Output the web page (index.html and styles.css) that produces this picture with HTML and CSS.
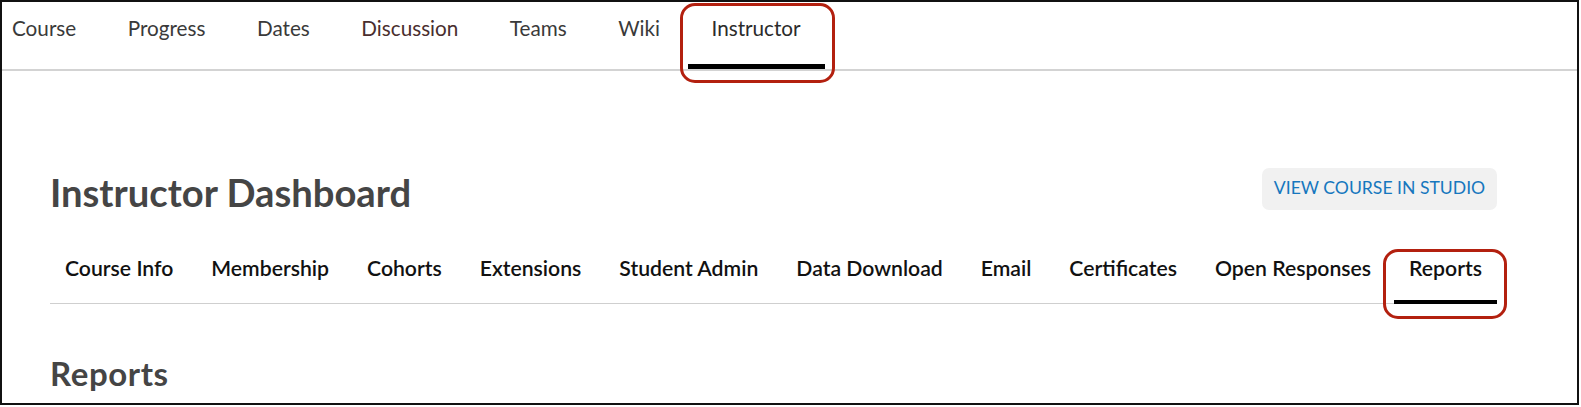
FILE: index.html
```html
<!DOCTYPE html>
<html lang="en">
<head>
<meta charset="utf-8">
<title>Instructor Dashboard</title>
<link rel="stylesheet" href="styles.css">
</head>
<body>
<div class="frame">
  <nav class="course-nav">
    <a class="nav-item first" href="#">Course</a>
    <a class="nav-item" href="#">Progress</a>
    <a class="nav-item" href="#">Dates</a>
    <a class="nav-item visited" href="#">Discussion</a>
    <a class="nav-item" href="#">Teams</a>
    <a class="nav-item" href="#">Wiki</a>
    <a class="nav-item active" href="#">Instructor</a>
  </nav>
  <main class="content">
    <div class="header-row">
      <h1 class="page-title">Instructor Dashboard</h1>
      <a class="studio-btn" href="#">VIEW COURSE IN STUDIO</a>
    </div>
    <ul class="tabs">
      <li class="tab">Course Info</li>
      <li class="tab">Membership</li>
      <li class="tab">Cohorts</li>
      <li class="tab">Extensions</li>
      <li class="tab">Student Admin</li>
      <li class="tab">Data Download</li>
      <li class="tab">Email</li>
      <li class="tab">Certificates</li>
      <li class="tab">Open Responses</li>
      <li class="tab active">Reports</li>
    </ul>
    <h2 class="section-title">Reports</h2>
  </main>
  <div class="callout callout-instructor"></div>
  <div class="callout callout-reports"></div>
</div>
</body>
</html>
```
FILE: styles.css
```css
* { box-sizing: border-box; }
html, body { margin: 0; padding: 0; background: #fff; }
body { font-family: Lato, "Open Sans", sans-serif; overflow: hidden; }

.frame {
  position: relative;
  width: 1579px;
  height: 405px;
  border: 2px solid #111;
  overflow: hidden;
}

.course-nav {
  display: flex;
  height: 67px;
  border-bottom: 2px solid #d3d3d3;
  box-sizing: content-box;
}
.nav-item {
  display: block;
  padding: 14px 24px 22px;
  margin-right: 3.5px;
  font-size: 20.7px;
  line-height: 24px;
  color: #3a3a3a;
  text-decoration: none;
  border-bottom: 5px solid transparent;
}
.nav-item.first { padding-left: 10px; }
.nav-item.visited { color: #4a2e2e; }
.nav-item.active { border-bottom-color: #000; color: #2b2b2b; }

.content {
  margin-left: 48px;
  width: 1447px;
  padding-top: 97px;
}

.header-row {
  display: flex;
  justify-content: space-between;
  align-items: flex-start;
}
.page-title {
  margin: 2px 0 0;
  font-size: 38.2px;
  line-height: 45px;
  font-weight: 700;
  color: #454545;
}
.studio-btn {
  display: block;
  height: 42px;
  width: 235px;
  padding-bottom: 2px;
  text-align: center;
  line-height: 40px;
  font-size: 17.6px;
  color: #1677be;
  background: #f1f1f1;
  border-radius: 7px;
  text-decoration: none;
}

.tabs {
  list-style: none;
  margin: 41px 0 0;
  padding: 0;
  display: flex;
  justify-content: space-between;
  border-bottom: 1px solid #cfcfcf;
}
.tab {
  padding: 0 15px 19px;
  margin-bottom: -1px;
  font-size: 21.2px;
  line-height: 25px;
  font-weight: 600;
  color: #111;
  border-bottom: 4px solid transparent;
}
.tab.active { border-bottom-color: #000; }

.section-title {
  margin: 50px 0 0;
  font-size: 33px;
  line-height: 38px;
  letter-spacing: 0.6px;
  font-weight: 700;
  color: #454545;
}

.callout {
  position: absolute;
  border: 3px solid #b3200f;
  border-radius: 15px;
  pointer-events: none;
}
.callout-instructor { left: 678px; top: 1px; width: 155px; height: 80px; }
.callout-reports { left: 1381px; top: 247px; width: 124px; height: 70px; }
```
